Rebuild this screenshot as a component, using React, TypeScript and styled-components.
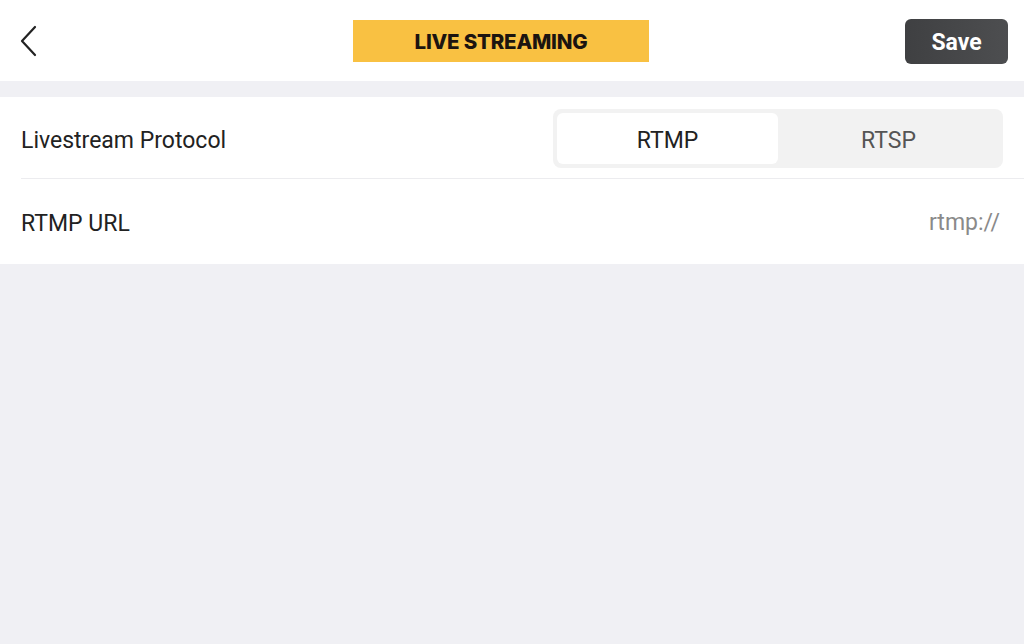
import React, { useState } from 'react';
import styled, { createGlobalStyle } from 'styled-components';

const GlobalStyle = createGlobalStyle`
    html, body {
        margin: 0;
        padding: 0;
        background: #f0f0f4;
        font-family: Roboto, "Liberation Sans", Arial, sans-serif;
    }
`;

const Page = styled.div`
    width: 100%;
    min-height: 644px;
    background: #f0f0f4;
`;

const Header = styled.div`
    height: 81px;
    background: #ffffff;
    display: flex;
    align-items: center;
    padding: 0 16px 0 19px;
    box-sizing: border-box;
`;

const BackButton = styled.button`
    width: 40px;
    height: 44px;
    border: none;
    background: none;
    padding: 0;
    display: flex;
    align-items: center;
    color: #222;
    cursor: pointer;
`;

const TitleBanner = styled.div`
    width: 296px;
    height: 42px;
    margin-left: 294px;
    background: #f9c142;
    display: flex;
    align-items: center;
    justify-content: center;
    font-family: Inter, Roboto, sans-serif;
    font-weight: 800;
    font-size: 20.5px;
    letter-spacing: -0.2px;
    color: #1c1410;
    margin-top: 1px;
`;

const SaveButton = styled.button`
    width: 103px;
    height: 45px;
    margin: 2px 0 0 auto;
    padding: 2px 0 0;
    border: none;
    border-radius: 6px;
    background: linear-gradient(90deg, #3f4042 0%, #4d4e50 100%);
    color: #ffffff;
    font-family: Roboto, sans-serif;
    font-weight: 700;
    font-size: 23px;
    cursor: pointer;
`;

const List = styled.div`
    margin-top: 16px;
    background: #ffffff;
    padding-left: 21px;
`;

const Row = styled.div<{ $height: number; $divider?: boolean }>`
    height: ${p => p.$height}px;
    display: flex;
    align-items: center;
    justify-content: space-between;
    padding-right: 21px;
    border-bottom: ${p => (p.$divider ? '1px solid #ececef' : 'none')};
`;

const Label = styled.div<{ $offset?: number }>`
    font-size: 23px;
    color: #222222;
    margin-top: ${p => p.$offset ?? 0}px;
`;

const Value = styled.div`
    font-size: 23px;
    color: #8a8a8a;
    margin: 2px 3px 0 0;
`;

const Segmented = styled.div`
    width: 450px;
    height: 59px;
    background: #f2f2f2;
    border-radius: 8px;
    padding: 4px;
    box-sizing: border-box;
    display: flex;
    margin-top: 2px;
`;

const Segment = styled.button<{ $active: boolean }>`
    flex: 1;
    border: none;
    border-radius: 6px;
    padding: 4px 0 0;
    background: ${p => (p.$active ? '#ffffff' : 'transparent')};
    font-family: Roboto, sans-serif;
    font-size: 23px;
    color: ${p => (p.$active ? '#222222' : '#555555')};
    cursor: pointer;
`;

function ChevronLeft() {
    return (
        <svg width="20" height="32" viewBox="0 0 20 32" fill="none">
            <path d="M16 2 L3 16 L16 30" stroke="currentColor" strokeWidth="2.2" strokeLinecap="round" strokeLinejoin="round" />
        </svg>
    );
}

export default function App() {
    const [protocol, setProtocol] = useState('RTMP');
    return (
        <Page>
            <GlobalStyle />
            <Header>
                <BackButton>
                    <ChevronLeft />
                </BackButton>
                <TitleBanner>LIVE STREAMING</TitleBanner>
                <SaveButton>Save</SaveButton>
            </Header>
            <List>
                <Row $height={81} $divider>
                    <Label $offset={6}>Livestream Protocol</Label>
                    <Segmented>
                        {['RTMP', 'RTSP'].map(p => (
                            <Segment key={p} $active={protocol === p} onClick={() => setProtocol(p)}>
                                {p}
                            </Segment>
                        ))}
                    </Segmented>
                </Row>
                <Row $height={85}>
                    <Label $offset={3}>RTMP URL</Label>
                    <Value>rtmp://</Value>
                </Row>
            </List>
        </Page>
    );
}
